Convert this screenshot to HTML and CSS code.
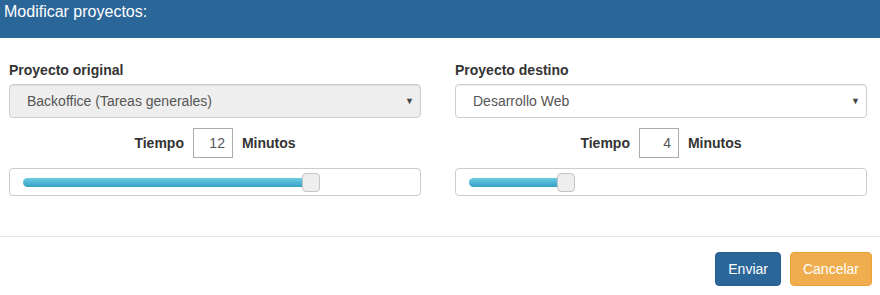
FILE: index.html
```html
<!DOCTYPE html>
<html lang="es">
<head>
    <meta charset="UTF-8">
    <title>Modificar proyectos</title>
    <link rel="stylesheet" href="styles.css">
</head>
<body>
    <div class="modal">
        <div class="modal-header">Modificar proyectos:</div>
        <div class="modal-body">
            <div class="project-col">
                <div class="field-label">Proyecto original</div>
                <div class="select disabled">
                    <span>Backoffice (Tareas generales)</span>
                    <span class="caret">&#9660;</span>
                </div>
                <div class="time-row">
                    <span class="time-label">Tiempo</span>
                    <div class="time-input">12</div>
                    <span class="time-label">Minutos</span>
                </div>
                <div class="slider">
                    <div class="slider-fill" style="width: 287px"></div>
                    <div class="slider-handle"></div>
                </div>
            </div>
            <div class="project-col">
                <div class="field-label">Proyecto destino</div>
                <div class="select">
                    <span>Desarrollo Web</span>
                    <span class="caret">&#9660;</span>
                </div>
                <div class="time-row">
                    <span class="time-label">Tiempo</span>
                    <div class="time-input">4</div>
                    <span class="time-label">Minutos</span>
                </div>
                <div class="slider">
                    <div class="slider-fill" style="width: 96px"></div>
                    <div class="slider-handle"></div>
                </div>
            </div>
        </div>
        <div class="modal-footer">
            <button class="btn btn-primary">Enviar</button>
            <button class="btn btn-warning">Cancelar</button>
        </div>
    </div>
</body>
</html>
```

FILE: styles.css
```css
body {
    margin: 0;
    font-family: "Liberation Sans", Arial, sans-serif;
    font-size: 14px;
    color: #333;
    background-color: #fff;
}
.modal {
    width: 880px;
}
.modal-header {
    height: 38px;
    box-sizing: border-box;
    padding: 2px 4px 0;
    background-color: #2b6699;
    color: #fff;
    font-size: 16px;
    line-height: 20px;
}
.modal-body {
    display: grid;
    grid-template-columns: 412px 412px;
    column-gap: 34px;
    padding: 22px 13px 40px 9px;
    border-bottom: 1px solid #e5e5e5;
}
.field-label {
    font-weight: bold;
    line-height: 20px;
    margin-bottom: 4px;
}
.select {
    height: 34px;
    box-sizing: border-box;
    display: flex;
    align-items: center;
    justify-content: space-between;
    padding: 0 6px 0 17px;
    border: 1px solid #ccc;
    border-radius: 4px;
    color: #555;
    background-color: #fff;
    box-shadow: inset 0 1px 1px rgba(0, 0, 0, 0.075);
}
.select.disabled {
    background-color: #eee;
}
.caret {
    font-size: 9px;
    color: #444;
}
.time-row {
    display: flex;
    justify-content: center;
    align-items: center;
    gap: 9px;
    margin-top: 10px;
    height: 30px;
}
.time-label {
    font-weight: bold;
}
.time-input {
    width: 40px;
    height: 30px;
    box-sizing: border-box;
    border: 1px solid #aaa;
    padding-right: 7px;
    text-align: right;
    line-height: 28px;
    color: #555;
}
.slider {
    display: flex;
    align-items: center;
    height: 28px;
    box-sizing: border-box;
    margin-top: 10px;
    padding-left: 13px;
    border: 1px solid #ccc;
    border-radius: 4px;
}
.slider-fill {
    height: 9px;
    border-radius: 5px;
    background: linear-gradient(#6ccbe4, #36a2c4);
}
.slider-handle {
    width: 18px;
    height: 19px;
    box-sizing: border-box;
    margin-left: -8px;
    background-color: #eee;
    border: 1px solid #c4c4c4;
    border-radius: 4px;
}
.modal-footer {
    display: flex;
    justify-content: flex-end;
    gap: 9px;
    padding: 15px 8px 0 0;
}
.btn {
    height: 34px;
    padding: 0 12px;
    font-family: "Liberation Sans", Arial, sans-serif;
    font-size: 14px;
    color: #fff;
    border: 1px solid transparent;
    border-radius: 4px;
}
.btn-primary {
    background-color: #2b6699;
    border-color: #285f8f;
}
.btn-warning {
    background-color: #f0ad4e;
    border-color: #eea236;
}
```
